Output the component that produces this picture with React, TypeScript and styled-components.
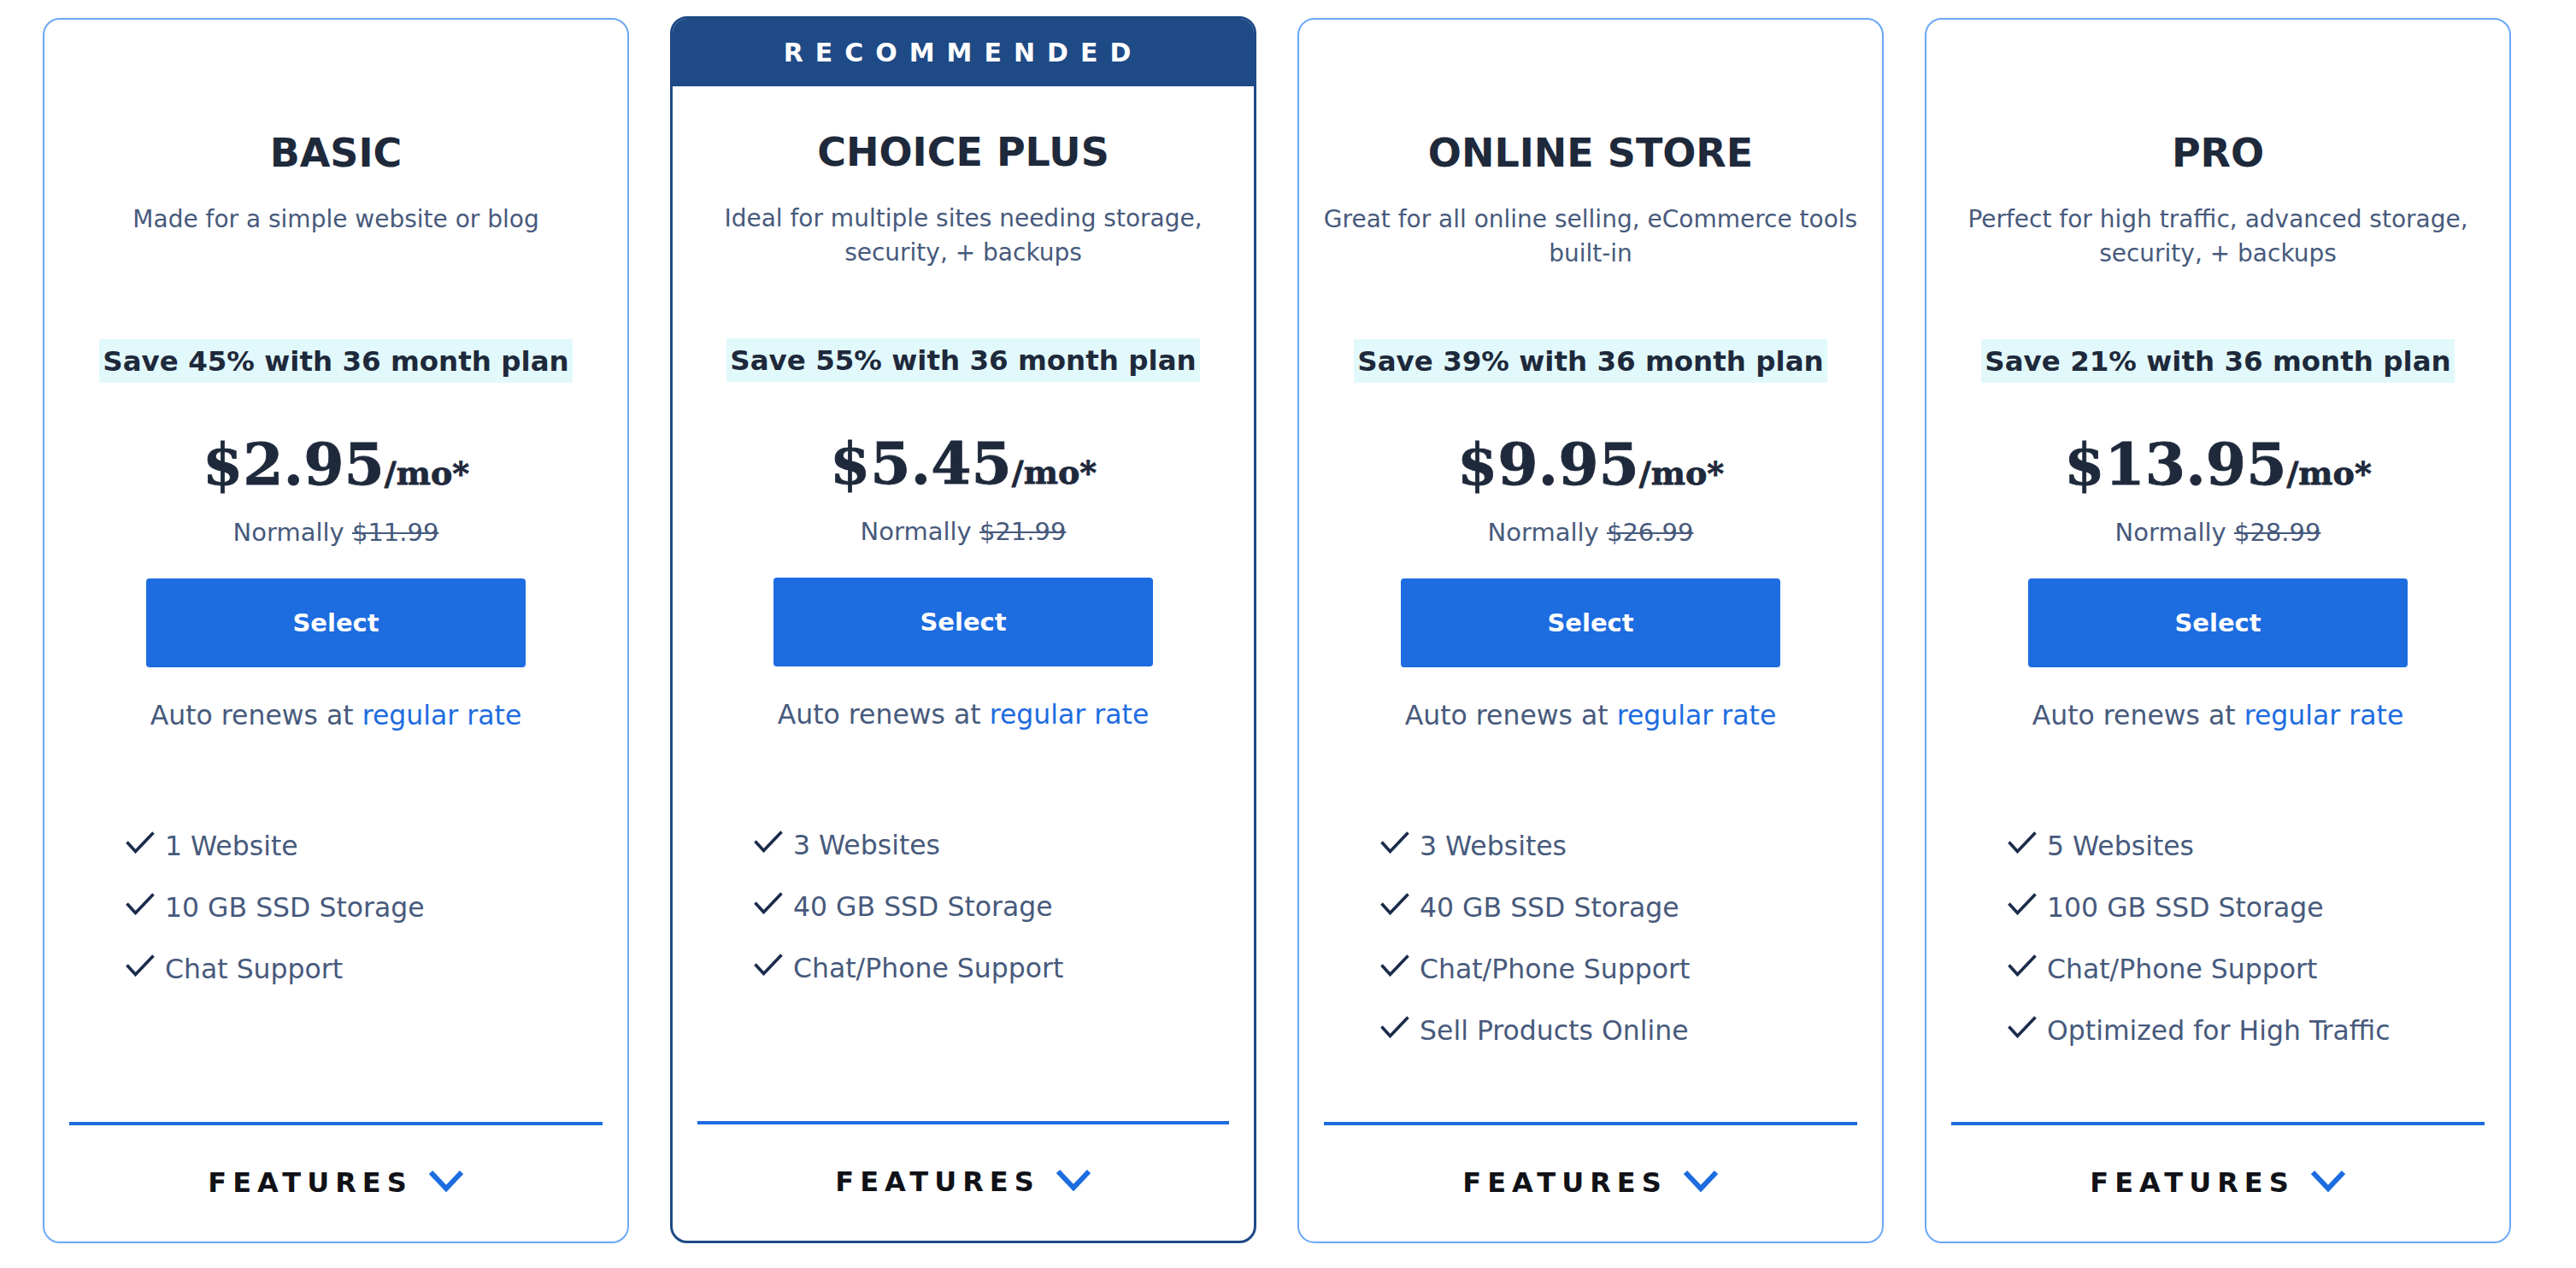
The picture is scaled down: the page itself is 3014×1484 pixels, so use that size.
import React from 'react';
import styled, { createGlobalStyle } from 'styled-components';

const GlobalStyle = createGlobalStyle`
  html, body {
    margin: 0;
    padding: 0;
    background: #ffffff;
  }
  body {
    font-family: "DejaVu Sans", "Liberation Sans", sans-serif;
    color: #1e293b;
  }
  * { box-sizing: border-box; }
`;

const Row = styled.main`
  display: flex;
  align-items: flex-end;
  gap: 48px;
  padding: 19px 0 0 50px;
`;

const Card = styled.article<{ $featured?: boolean }>`
  width: 686px;
  height: ${(p) => (p.$featured ? 1436 : 1434)}px;
  border: ${(p) => (p.$featured ? '3px solid #1e4a86' : '2px solid #6ba8f6')};
  border-radius: 20px;
  overflow: hidden;
  background: #ffffff;
  display: flex;
  flex-direction: column;
`;

const Ribbon = styled.div<{ $show?: boolean }>`
  height: 79px;
  flex: none;
  display: flex;
  align-items: center;
  justify-content: center;
  background: ${(p) => (p.$show ? '#1e4a86' : 'transparent')};
  color: #ffffff;
  font-size: 30px;
  font-weight: 700;
  letter-spacing: 14px;
`;

const Body = styled.div`
  flex: 1;
  display: flex;
  flex-direction: column;
  align-items: center;
  text-align: center;
  padding-top: 50px;
`;

const Title = styled.h2`
  margin: 0;
  font-size: 46px;
  line-height: 55px;
  font-weight: 700;
  color: #1e293b;
`;

const Tagline = styled.p`
  margin: 30px 0 0;
  padding: 0 26px;
  min-height: 80px;
  font-size: 28px;
  line-height: 40px;
  color: #475a7c;
`;

const Savings = styled.div`
  margin-top: 80px;
  height: 51px;
  padding: 0 4px;
  display: flex;
  align-items: center;
  background: #e2f9fc;
  font-size: 32.5px;
  font-weight: 700;
  color: #1e293b;
`;

const Price = styled.div`
  margin-top: 55px;
  font-family: "DejaVu Serif", "Liberation Serif", serif;
  font-weight: 700;
  font-size: 68px;
  line-height: 80px;
  color: #1e293b;
  white-space: nowrap;
  -webkit-text-stroke: 0.8px #1e293b;
`;

const Per = styled.span`
  font-size: 38px;
  line-height: 0;
`;

const Normally = styled.div`
  margin-top: 20px;
  font-size: 29px;
  line-height: 40px;
  color: #475a7c;
`;

const Strike = styled.s`
  text-decoration-thickness: 2px;
`;

const SelectButton = styled.button`
  margin-top: 34px;
  width: 444px;
  height: 104px;
  border: none;
  border-radius: 4px;
  background: #1d6ce0;
  color: #ffffff;
  font-family: "DejaVu Sans", "Liberation Sans", sans-serif;
  font-size: 29px;
  font-weight: 700;
  cursor: pointer;
`;

const Renew = styled.div`
  margin-top: 36px;
  font-size: 31.5px;
  line-height: 40px;
  color: #475a7c;
`;

const RateLink = styled.a`
  color: #1d6ce0;
  text-decoration: none;
`;

const FeatureList = styled.ul`
  flex: 1;
  align-self: stretch;
  margin: 113px 0 0;
  padding: 0 0 0 95px;
  list-style: none;
  display: flex;
  flex-direction: column;
  gap: 32px;
  text-align: left;
`;

const FeatureItem = styled.li`
  display: flex;
  align-items: center;
  gap: 12px;
  font-size: 31.5px;
  line-height: 40px;
  color: #475a7c;
`;

const CheckMark = styled.svg`
  flex: none;
  margin-bottom: 8px;
`;

const Footer = styled.div`
  flex: none;
  margin: 0 29px;
  border-top: 4px solid #1d6ce0;
  padding: 47px 0 49px;
  display: flex;
  align-items: center;
  justify-content: center;
`;

const FooterLabel = styled.span`
  font-size: 32px;
  line-height: 40px;
  font-weight: 700;
  letter-spacing: 7px;
  color: #101217;
`;

const Chevron = styled.svg`
  flex: none;
  margin-left: 18px;
  margin-bottom: 4px;
`;

type Plan = {
  name: string;
  tagline: string;
  save: string;
  price: string;
  normal: string;
  features: string[];
  featured?: boolean;
};

const plans: Plan[] = [
  {
    name: 'BASIC',
    tagline: 'Made for a simple website or blog',
    save: 'Save 45% with 36 month plan',
    price: '$2.95',
    normal: '$11.99',
    features: ['1 Website', '10 GB SSD Storage', 'Chat Support'],
  },
  {
    name: 'CHOICE PLUS',
    tagline: 'Ideal for multiple sites needing storage, security, + backups',
    save: 'Save 55% with 36 month plan',
    price: '$5.45',
    normal: '$21.99',
    features: ['3 Websites', '40 GB SSD Storage', 'Chat/Phone Support'],
    featured: true,
  },
  {
    name: 'ONLINE STORE',
    tagline: 'Great for all online selling, eCommerce tools built-in',
    save: 'Save 39% with 36 month plan',
    price: '$9.95',
    normal: '$26.99',
    features: ['3 Websites', '40 GB SSD Storage', 'Chat/Phone Support', 'Sell Products Online'],
  },
  {
    name: 'PRO',
    tagline: 'Perfect for high traffic, advanced storage, security, + backups',
    save: 'Save 21% with 36 month plan',
    price: '$13.95',
    normal: '$28.99',
    features: ['5 Websites', '100 GB SSD Storage', 'Chat/Phone Support', 'Optimized for High Traffic'],
  },
];

const Check = () => (
  <CheckMark width="34" height="26" viewBox="0 0 34 26" aria-hidden="true">
    <polyline
      points="1.5,12.5 11.5,23.5 32.5,1.5"
      fill="none"
      stroke="#1b2b4b"
      strokeWidth="3.6"
      strokeLinejoin="miter"
    />
  </CheckMark>
);

const Down = () => (
  <Chevron width="42" height="26" viewBox="0 0 42 26" aria-hidden="true">
    <polyline
      points="3,3 21,22 39,3"
      fill="none"
      stroke="#1d6ce0"
      strokeWidth="6"
      strokeLinejoin="miter"
    />
  </Chevron>
);

const PlanCard = ({ plan }: { plan: Plan }) => (
  <Card $featured={plan.featured}>
    <Ribbon $show={plan.featured}>{plan.featured ? 'RECOMMENDED' : ''}</Ribbon>
    <Body>
      <Title>{plan.name}</Title>
      <Tagline>{plan.tagline}</Tagline>
      <Savings>{plan.save}</Savings>
      <Price>
        {plan.price}
        <Per>/mo*</Per>
      </Price>
      <Normally>
        Normally <Strike>{plan.normal}</Strike>
      </Normally>
      <SelectButton type="button">Select</SelectButton>
      <Renew>
        Auto renews at <RateLink href="#">regular rate</RateLink>
      </Renew>
      <FeatureList>
        {plan.features.map((f) => (
          <FeatureItem key={f}>
            <Check />
            {f}
          </FeatureItem>
        ))}
      </FeatureList>
    </Body>
    <Footer>
      <FooterLabel>FEATURES</FooterLabel>
      <Down />
    </Footer>
  </Card>
);

export default function App() {
  return (
    <>
      <GlobalStyle />
      <Row>
        {plans.map((p) => (
          <PlanCard key={p.name} plan={p} />
        ))}
      </Row>
    </>
  );
}
